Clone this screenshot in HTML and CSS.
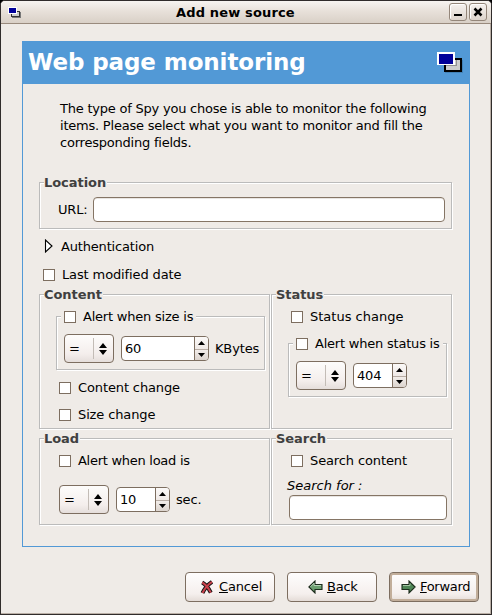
FILE: index.html
```html
<!DOCTYPE html>
<html lang="en">
<head>
<meta charset="utf-8">
<title>Add new source</title>
<link rel="stylesheet" href="styles.css">
</head>
<body>
<div class="window">
  <header class="titlebar">
    <svg class="app-icon" width="14" height="12" viewBox="0 0 14 12" shape-rendering="crispEdges"><path fill="#777" d="M4 5h9v6H4z"/><path fill="#333" d="M3 4h9v6H3z"/><path fill="#ccc" d="M4 5h7v4H4z"/><path fill="#fff" d="M0 0h9v7H0z"/><path fill="#009" d="M1 1h7v5H1z"/></svg>
    <h1 class="window-title">Add new source</h1>
    <div class="window-buttons">
      <span class="wbtn"><svg width="16" height="16"><path fill="#000" d="M4 10h8v2H4z"/></svg></span>
      <span class="wbtn"><svg width="16" height="16"><path stroke="#000" stroke-width="2.5" d="M4.500 4.500l7 7M11.500 4.500l-7 7"/></svg></span>
    </div>
  </header>

  <main class="panel">
    <div class="banner">
      <h2 class="banner-title">Web page monitoring</h2>
      <svg width="26" height="22" viewBox="0 0 26 22" shape-rendering="crispEdges"><path fill="#3973a3" d="M8 8h18v13H8z" opacity=".6"/><path fill="#000" d="M7 6h18v14H7z"/><path fill="#ccc" d="M9 8h14v10H9z"/><path fill="#555" opacity=".5" d="M9 13h10V8h1v6H9z"/><path fill="#fff" d="M0 0h18v13H0z"/><path fill="#009" d="M2 2h14v10H2z"/></svg>
    </div>
    <p class="intro">The type of Spy you chose is able to monitor the following<br>items. Please select what you want to monitor and fill the<br>corresponding fields.</p>

    <section class="frame location">
      <h3 class="legend">Location</h3>
      <label class="url-label">URL:</label><span class="entry"></span>
    </section>

    <div class="expander"><svg width="9" height="14" viewBox="0 0 9 14"><path d="M1.500 1v12L8 7z" fill="#fff" stroke="#000" stroke-width="1.100"/></svg>Authentication</div>
    <div class="check last-modified"><i class="box"></i>Last modified date</div>

    <div class="groups">
      <section class="frame content">
        <h3 class="legend">Content</h3>
        <div class="frame subframe">
          <div class="check sub-legend"><i class="box"></i>Alert when size is</div>
          <div class="controls">
            <span class="combo"><b>=</b><svg width="8" height="12"><path d="M4 0l4 5H0zM4 12l4-5H0z"/></svg></span>
            <span class="spin wide"><b>60</b><i><svg width="7" height="4"><path d="M3.5 0L7 4H0z"/></svg></i><i><svg width="7" height="4"><path d="M3.5 4L7 0H0z"/></svg></i></span>
            <span class="unit">KBytes</span>
          </div>
        </div>
        <div class="check content-change"><i class="box"></i>Content change</div>
        <div class="check size-change"><i class="box"></i>Size change</div>
      </section>

      <section class="frame status">
        <h3 class="legend">Status</h3>
        <div class="check first"><i class="box"></i>Status change</div>
        <div class="frame subframe">
          <div class="check sub-legend"><i class="box"></i>Alert when status is</div>
          <div class="controls">
            <span class="combo"><b>=</b><svg width="8" height="12"><path d="M4 0l4 5H0zM4 12l4-5H0z"/></svg></span>
            <span class="spin"><b>404</b><i><svg width="7" height="4"><path d="M3.5 0L7 4H0z"/></svg></i><i><svg width="7" height="4"><path d="M3.5 4L7 0H0z"/></svg></i></span>
          </div>
        </div>
      </section>

      <section class="frame load">
        <h3 class="legend">Load</h3>
        <div class="check first"><i class="box"></i>Alert when load is</div>
        <div class="controls">
          <span class="combo"><b>=</b><svg width="8" height="12"><path d="M4 0l4 5H0zM4 12l4-5H0z"/></svg></span>
          <span class="spin"><b>10</b><i><svg width="7" height="4"><path d="M3.5 0L7 4H0z"/></svg></i><i><svg width="7" height="4"><path d="M3.5 4L7 0H0z"/></svg></i></span>
          <span class="unit">sec.</span>
        </div>
      </section>

      <section class="frame search">
        <h3 class="legend">Search</h3>
        <div class="check first"><i class="box"></i>Search content</div>
        <label class="search-label">Search for :</label>
        <span class="entry"></span>
      </section>
    </div>
  </main>

  <footer class="actions">
    <button class="btn"><svg width="14" height="15" viewBox="0 0 14 15"><path d="M2.200 2.500C5 4 9 9 10.800 12.600M12 1.800C8 4.500 4.500 8.500 2.500 13" fill="none" stroke="#111" stroke-width="4"/><path d="M2.200 2.500C5 4 9 9 10.800 12.600M12 1.800C8 4.500 4.500 8.500 2.500 13" fill="none" stroke="#c8414b" stroke-width="2"/></svg><span class="cancel-text"><u>C</u>ancel</span></button>
    <button class="btn back"><svg width="15" height="14" viewBox="0 0 15 14"><path d="M.9 7L7 1v3.500h7v5H7V13z" fill="#6c9f70" stroke="#1c2b1c" stroke-width="1.100"/><path d="M2.500 6.800L6 3.200v2.300h7" fill="none" stroke="#b4d0b4"/></svg><span class="back-text"><u>B</u>ack</span></button>
    <button class="btn default"><svg width="15" height="14" viewBox="0 0 15 14"><path d="M14.100 7L8 1v3.500H1v5h7V13z" fill="#4f8556" stroke="#1c2b1c" stroke-width="1.100"/><path d="M2 5.500h7V3.500" fill="none" stroke="#a4c4a4"/></svg><span class="forward-text"><u>F</u>orward</span></button>
  </footer>
</div>
</body>
</html>
```
FILE: styles.css
```css
* { box-sizing: border-box; margin: 0; padding: 0; }
body { background: #000; color: #000; font: 13px/17px "DejaVu Sans", sans-serif; white-space: nowrap; overflow: hidden; }
svg { display: block; flex: none; }
i, b { font-style: normal; font-weight: normal; }

.window { width: 492px; height: 615px; border: 1px solid #302c2b; border-radius: 5px 5px 0 0; background: #efebe7; overflow: hidden; box-shadow: inset -1px -1px 0 #b9aea5; }
.titlebar { height: 23px; display: flex; align-items: center; padding: 0 4px 0 7px; background: linear-gradient(#f7f4f1, #e8e1da 45%, #d9d0c7); border-bottom: 1px solid #998a7d; }
.app-icon { margin-top: 2px; }
.window-title { flex: 1; font-size: 13px; font-weight: bold; line-height: 17px; padding-left: 154px; letter-spacing: .15px; }
.window-buttons { display: flex; gap: 2px; }
.wbtn { width: 18px; height: 18px; border: 1px solid #94867a; border-radius: 3px; background: linear-gradient(#f5f1ee, #ddd4cc); box-shadow: inset 1px 1px 0 #fff; }

.panel { width: 448px; height: 506px; margin: 17px 0 0 21px; border: 1px solid #5299d6; border-top: 0; padding: 0 16px; }
.banner { height: 43px; margin: 0 -16px; padding: 0 6px 0 5px; background: #5299d6; color: #fff; display: flex; justify-content: space-between; align-items: center; }
.banner-title { font-size: 23px; line-height: 30px; font-weight: bold; letter-spacing: -.1px; margin-top: -2px; }
.intro { padding: 16px 0 0 21px; height: 67px; letter-spacing: -.22px; }

.frame { position: relative; border: 1px solid #bbb; box-shadow: 1px 1px 0 #fff, inset 1px 1px 0 #fff; }
.legend { position: absolute; top: -9px; left: 4px; font-size: 13px; line-height: 17px; font-weight: bold; color: #404040; background: #efebe7; padding-right: 1px; letter-spacing: -.05px; }
.location { width: 413px; height: 47px; margin-top: 31px; padding: 14px 6px 6px 18px; display: flex; align-items: center; }
.url-label { width: 35px; letter-spacing: -.2px; }
.entry { display: block; height: 25px; flex: 1; background: #fff; border: 1px solid #857565; border-radius: 4px; box-shadow: inset 0 1px 0 #e8e5e2; }
.expander { margin: 9px 0 0 5px; height: 17px; display: flex; align-items: center; gap: 8px; letter-spacing: -.17px; }
.expander svg { margin-top: -2px; }
.check { display: flex; align-items: center; gap: 7px; height: 17px; letter-spacing: -.12px; }
.box { width: 12px; height: 12px; border: 1px solid #7d6e60; background: #fff; flex: none; }
.last-modified { margin: 11px 0 0 4px; }

.groups { display: grid; grid-template-columns: 231px 181px; grid-template-rows: 135px 87px; gap: 9px 1px; margin-top: 11px; }
.content { padding: 21px 0 0 16px; }
.content .subframe { width: 209px; }
.subframe { height: 54px; padding: 17px 0 0 7px; }
.sub-legend { position: absolute; top: -9px; left: 4px; padding: 0 3px; background: #efebe7; letter-spacing: -.21px; }
.controls { display: flex; align-items: center; gap: 7px; height: 29px; }
.unit { margin-left: -1px; letter-spacing: -.15px; }
.content-change { margin: 9px 0 0 3px; }
.size-change { margin: 10px 0 0 3px; }
.first { margin: 13px 0 0 19px; }
.load .first { letter-spacing: -.27px; }
.status .first { letter-spacing: 0; }
.status .subframe { width: 159px; margin: 18px 0 0 16px; }
.load .controls { margin: 16px 0 0 19px; }
.search-label { display: block; font-style: italic; margin: 8px 0 1px 15px; }
.search .entry { width: 158px; margin-left: 17px; }

.combo { width: 50px; height: 29px; border: 1px solid #7d6e60; border-radius: 4px; background: linear-gradient(#fdfcfb, #f4eeec 70%, #e5dedb); display: flex; align-items: center; }
.combo b { width: 29px; height: 21px; line-height: 21px; padding-left: 4px; border-right: 1px solid #c3bcb6; }
.combo svg { margin-left: 5px; }
.spin { width: 54px; height: 25px; border: 1px solid #7d6e60; border-radius: 4px; display: grid; grid-template-columns: 1fr 13px; grid-template-rows: 1fr 1fr; overflow: hidden; background: #fff; }
.spin.wide { width: 88px; }
.spin b { grid-row: span 2; line-height: 23px; padding-left: 3px; border-right: 1px solid #7d6e60; letter-spacing: -.2px; }
.spin i { display: flex; align-items: center; justify-content: center; background: linear-gradient(#fbf9f8, #efe9e6); }
.spin i:last-child { border-top: 1px solid #b7aca4; background: linear-gradient(#f2edea, #dcd4ce); }

.actions { display: flex; gap: 12px; margin: 25px 0 0 184px; }
.btn { width: 90px; height: 30px; border: 1px solid #7d6e60; border-radius: 4px; background: linear-gradient(#fefdfd, #f5efed 75%, #e4dcd7); font: inherit; color: inherit; display: flex; align-items: center; padding-left: 14px; gap: 5px; letter-spacing: -.15px; }
.btn span { margin-top: -1px; }
.btn.back { padding-left: 20px; gap: 4px; letter-spacing: -.25px; }
.btn.default { padding-left: 11px; gap: 4px; letter-spacing: -.3px; box-shadow: inset 0 0 0 2px #c2ae9a; }
```
